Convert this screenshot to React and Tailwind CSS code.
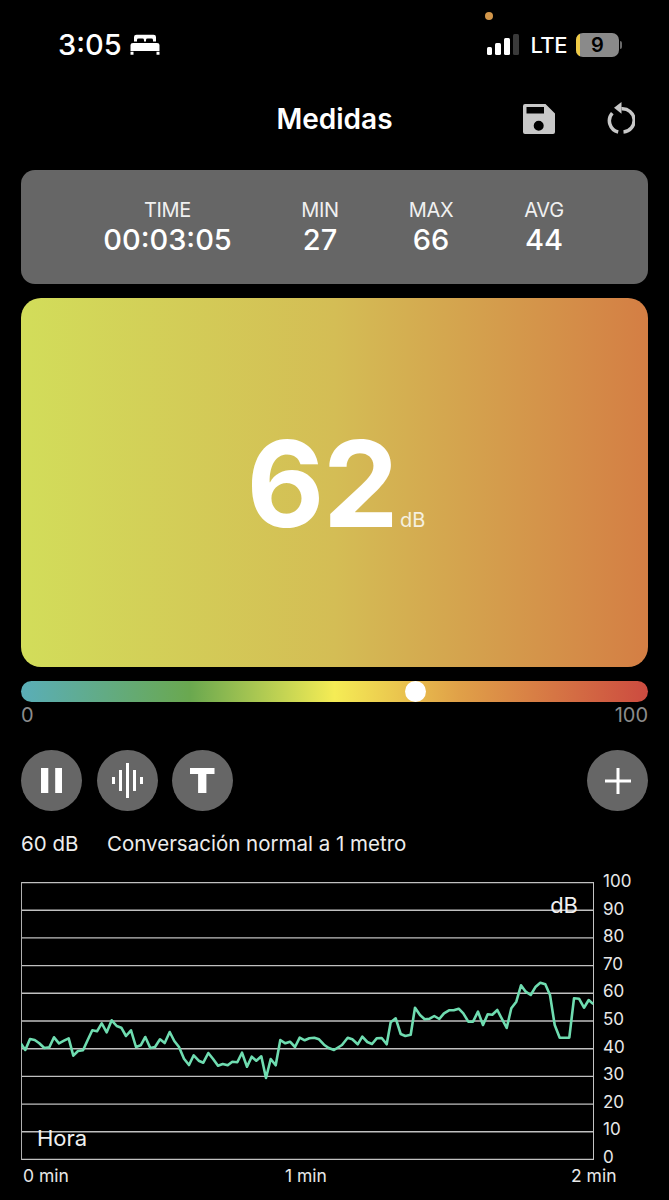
import React from 'react';

const font = "font-['Inter','Liberation_Sans',sans-serif]";

// chart trace, sampled off the reference in page pixels x3, relative to crops at x=0 and x=334
const left = [[62,250],[76,270],[90,237],[104,240],[118,250],[133,264],[148,262],[162,232],[177,250],[192,242],[206,235],[220,287],[234,273],[249,271],[263,240],[277,211],[291,214],[305,190],[320,217],[335,181],[350,198],[364,203],[378,228],[393,211],[408,261],[422,256],[436,231],[451,264],[465,261],[480,238],[494,249],[509,216],[523,243],[537,261],[552,296],[567,315],[581,286],[596,302],[610,308],[625,279],[640,298],[654,317],[668,312],[683,316],[697,305],[712,307],[726,278],[741,320],[755,290],[769,302],[784,289],[798,354],[812,297],[827,316],[841,240],[856,250],[870,245],[885,261],[899,233],[914,241],[928,235],[943,233],[957,238],[972,254],[986,264]];
const right = [[0,270],[24,255],[41,233],[55,238],[71,253],[85,230],[100,246],[114,252],[128,235],[143,234],[158,253],[170,187],[185,175],[200,222],[214,228],[230,224],[243,143],[258,165],[272,178],[287,176],[301,168],[316,177],[330,160],[345,151],[359,151],[374,146],[388,160],[403,185],[417,185],[432,155],[447,195],[461,163],[475,164],[490,150],[518,204],[532,145],[547,125],[561,76],[575,95],[590,105],[605,80],[619,68],[634,73],[648,105],[662,195],[677,233],[706,233],[720,115],[735,116],[750,143],[764,120],[778,132]];

const trace = [
  ...left.map(([x, y]) => [x / 3 - 21, y / 3 + 78]),
  ...right.map(([x, y]) => [x / 3 + 313, y / 3 + 78]),
]
  .map(([x, y]) => `${x.toFixed(1)},${y.toFixed(1)}`)
  .join(' ');

function Stat({ label, value, className }) {
  return (
    <div className={`flex flex-col items-center ${className}`}>
      <span className="text-[20px] leading-[24px] text-[#f0f0f0] tracking-[-0.3px]">{label}</span>
      <span className="text-[29px] leading-[35px] font-medium text-white">{value}</span>
    </div>
  );
}

function RoundButton({ children }) {
  return (
    <button className="w-[61px] h-[61px] rounded-full bg-[#666666] flex items-center justify-center">
      {children}
    </button>
  );
}

function Chart() {
  const ticks = [100, 90, 80, 70, 60, 50, 40, 30, 20, 10, 0];
  return (
    <div className="mt-[26px] pl-[21px] flex h-[278px]">
      <div className="relative w-[573px] h-[278px]">
        <svg className="w-[573px] h-[278px]" viewBox="0 0 573 278" fill="none">
          {ticks.map((t, i) => (
            <line key={t} x1="0" x2="573" y1={0.5 + i * 27.7} y2={0.5 + i * 27.7} stroke="#c0c0c0" strokeWidth="1.4" />
          ))}
          <line x1="0.5" x2="0.5" y1="0" y2="278" stroke="#b0b0b0" />
          <line x1="572.5" x2="572.5" y1="0" y2="278" stroke="#c4c4c4" />
          <polyline points={trace} stroke="#6fdcb0" strokeWidth="2.6" strokeLinejoin="round" />
        </svg>
        <span className="absolute right-[16px] top-[11px] text-[22px] leading-[24px] text-[#f0f0f0]">dB</span>
        <span className="absolute left-[16px] bottom-[10px] text-[22px] leading-[24px] text-[#f0f0f0]">Hora</span>
      </div>
      <div className="ml-[9px] -mt-[11px] h-[296px] shrink-0 flex flex-col justify-between">
        {ticks.map((t) => (
          <span key={t} className="text-[17px] leading-[20px] text-[#e8e8e8]">{t}</span>
        ))}
      </div>
    </div>
  );
}

export default function App() {
  return (
    <div className={`${font} w-[669px] h-[1200px] bg-black text-white overflow-hidden`}>
      {/* status bar */}
      <div className="relative h-[86px] px-[58px] pt-[27px] flex items-start justify-between">
        <div className="flex items-center gap-[8px]">
          <span className="text-[29px] leading-[35px] font-medium">3:05</span>
          <svg width="30" height="22" viewBox="0 0 30 26" fill="white" preserveAspectRatio="none">
            <path d="M4 3.500a2.500 2.500 0 0 1 2.500-2.500h17A2.500 2.500 0 0 1 26 3.500V9h-3V7a1.600 1.600 0 0 0-1.600-1.600h-3.800A1.600 1.600 0 0 0 16 7v2h-2V7a1.600 1.600 0 0 0-1.600-1.600H8.600A1.600 1.600 0 0 0 7 7v2H4z" />
            <path d="M3 10.500h24a2.500 2.500 0 0 1 2.500 2.500v7H.5v-7a2.500 2.500 0 0 1 2.500-2.500z" />
            <path d="M.5 21h3v3.500h-3zM26.500 21h3v3.500h-3z" />
          </svg>
        </div>
        <span className="absolute left-[485px] top-[12px] w-[8px] h-[8px] rounded-full bg-[#d2964a]" />
        <div className="flex items-center h-[35px] -mr-[11px]">
          <div className="flex items-end gap-[3px] h-[21px]">
            <span className="w-[5px] h-[8px] rounded-[1.5px] bg-white" />
            <span className="w-[6px] h-[12px] rounded-[1.5px] bg-white" />
            <span className="w-[6px] h-[17px] rounded-[1.5px] bg-white" />
            <span className="w-[6px] h-[21px] rounded-[1.5px] bg-[#3a3a3a]" />
          </div>
          <span className="ml-[12px] text-[22px] leading-[26px] font-medium tracking-[-0.5px]">LTE</span>
          <div className="ml-[9px] relative w-[43px] h-[24px] rounded-[7px] bg-[#8a8a8a] overflow-hidden flex items-center justify-center">
            <span className="absolute left-0 top-0 bottom-0 w-[4px] bg-[#f0ca45]" />
            <span className="text-[20px] leading-[24px] font-semibold text-black">9</span>
          </div>
          <span className="ml-[1px] w-[2px] h-[8px] rounded-r-[2px] bg-[#6a6a6a]" />
        </div>
      </div>

      {/* nav bar */}
      <div className="relative h-[64px] flex items-center justify-center">
        <span className="relative top-[1px] text-[28px] leading-[32px] font-semibold">Medidas</span>
        <svg className="absolute left-[523px] top-[18px]" width="32" height="30" viewBox="0 0 32 30">
          <path
            fill="#c8c8c8"
            fillRule="evenodd"
            d="M2 0h20.500L32 9.500V28a2 2 0 0 1-2 2H2a2 2 0 0 1-2-2V2a2 2 0 0 1 2-2zM3.500 3v6.500h17.500V3zM15.700 16.700a5 5 0 1 0 0 10 5 5 0 0 0 0-10z"
          />
        </svg>
        <svg className="absolute left-[607px] top-[16px]" width="28" height="33" viewBox="0 0 28 33" fill="none">
          <path d="M14.500 6.800A11.500 11.500 0 0 1 16.500 30" stroke="#c8c8c8" strokeWidth="3.500" />
          <path d="M5.300 11.200A11.500 11.500 0 0 0 11.200 30" stroke="#c8c8c8" strokeWidth="3.500" />
          <path d="M14.500 0L7 5.700L14.500 11.700z" fill="#c8c8c8" />
        </svg>
      </div>

      <div className="px-[21px] pt-[20px]">
        {/* stats */}
        <div className="h-[114px] rounded-[14px] bg-[#666666] flex items-center pl-[83px]">
          <Stat label="TIME" value="00:03:05" className="w-[127px]" />
          <Stat label="MIN" value="27" className="w-[60px] ml-[59px]" />
          <Stat label="MAX" value="66" className="w-[60px] ml-[51px]" />
          <Stat label="AVG" value="44" className="w-[60px] ml-[53px]" />
        </div>

        {/* current level */}
        <div className="mt-[14px] h-[369px] rounded-[20px] bg-[linear-gradient(90deg,#d2dd5a_0%,#d4bd55_50%,#d47e44_100%)] flex items-center justify-center">
          <div className="flex items-baseline pl-[3px] pt-[3px]">
            <span className="text-[120px] leading-[110px] font-bold text-white tracking-[-1.500px]">62</span>
            <span className="ml-[3px] text-[20px] leading-[20px] text-[#f5f0e0]">dB</span>
          </div>
        </div>

        {/* scale */}
        <div className="relative mt-[14px] h-[21px] rounded-full bg-[linear-gradient(90deg,#5aaeb8_0%,#6aa84f_27%,#f5ec55_50%,#e0a048_70%,#cc4b40_100%)]">
          <span className="absolute left-[384px] top-0 w-[21px] h-[21px] rounded-full bg-white" />
        </div>
        <div className="flex justify-between mt-[2px] text-[20px] leading-[22px] text-[#8c8c8c]">
          <span>0</span>
          <span>100</span>
        </div>

        {/* controls */}
        <div className="mt-[24px] flex items-center">
          <div className="flex gap-[14.500px]">
            <RoundButton>
              <svg width="21.500" height="25" viewBox="0 0 21.500 25" fill="white">
                <path d="M0 0h7.300v25H0zM14.200 0h7.300v25h-7.300z" />
              </svg>
            </RoundButton>
            <RoundButton>
              <svg width="31" height="35" viewBox="0 0 31 35" fill="none" stroke="white" strokeWidth="3">
                <path d="M1.500 14v7M8.500 7v21M15.500 0v35M22.500 7v21M29.500 14v7" />
              </svg>
            </RoundButton>
            <RoundButton>
              <svg width="24.500" height="25" viewBox="0 0 24.500 25" fill="white">
                <path d="M0 0h24.500v6H16.400v19H8.100V6H0z" />
              </svg>
            </RoundButton>
          </div>
          <div className="ml-auto">
            <RoundButton>
              <svg width="26" height="26" viewBox="0 0 26 26" fill="white">
                <path d="M11.500 0h3v11.500H26v3H14.500V26h-3V14.500H0v-3h11.500z" />
              </svg>
            </RoundButton>
          </div>
        </div>

        <div className="mt-[21px] flex text-[20.500px] leading-[24px] text-[#ededed]">
          <span className="w-[86px]">60 dB</span>
          <span>Conversación normal a 1 metro</span>
        </div>
      </div>

      <Chart />

      {/* time axis */}
      <div className="relative h-[24px] mt-[5px] text-[17.500px] leading-[22px] text-[#e8e8e8]">
        <span className="absolute left-[23px]">0 min</span>
        <span className="absolute left-[285px]">1 min</span>
        <span className="absolute left-[571px]">2 min</span>
      </div>
    </div>
  );
}
